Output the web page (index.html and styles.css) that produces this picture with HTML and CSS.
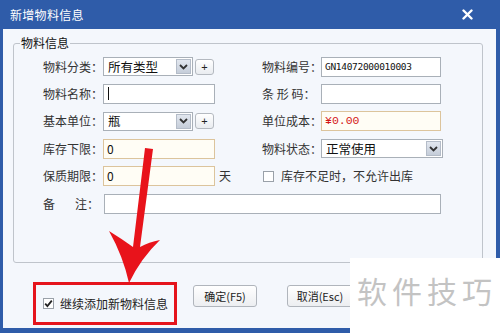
FILE: index.html
```html
<!DOCTYPE html>
<html lang="zh-CN">
<head>
    <meta charset="utf-8">
    <title>新增物料信息</title>
    <link rel="stylesheet" href="styles.css">
</head>
<body>
<div class="window">
    <div class="titlebar">
        <span class="title">新增物料信息</span>
        <svg class="close" width="11" height="11" viewBox="0 0 11 11">
            <path d="M1.5 1.5 L9.5 9.5 M9.5 1.5 L1.5 9.5" stroke="#fff" stroke-width="2.4" stroke-linecap="round"/>
        </svg>
    </div>

    <div class="client">
        <fieldset class="group">
            <legend>物料信息</legend>
            <div class="form">
                <span class="lbl">物料分类：</span>
                <div class="ctl">
                    <div class="select w90"><span class="val">所有类型</span><i class="drop"><svg width="9" height="6" viewBox="0 0 9 6"><path d="M1 1 L4.5 4.5 L8 1" fill="none" stroke="#333" stroke-width="1.8"/></svg></i></div>
                    <button class="plus">+</button>
                </div>
                <span class="lbl">物料编号：</span>
                <div class="ctl"><div class="input w120 code">GN14072000010003</div></div>

                <span class="lbl">物料名称：</span>
                <div class="ctl"><div class="input w112"><span class="caret"></span></div></div>
                <span class="lbl">条 形 码：</span>
                <div class="ctl"><div class="input w120"></div></div>

                <span class="lbl">基本单位：</span>
                <div class="ctl">
                    <div class="select w90"><span class="val">瓶</span><i class="drop"><svg width="9" height="6" viewBox="0 0 9 6"><path d="M1 1 L4.5 4.5 L8 1" fill="none" stroke="#333" stroke-width="1.8"/></svg></i></div>
                    <button class="plus">+</button>
                </div>
                <span class="lbl">单位成本：</span>
                <div class="ctl"><div class="input w120 warm money">¥0.00</div></div>

                <span class="lbl">库存下限：</span>
                <div class="ctl"><div class="input w112 warm">0</div></div>
                <span class="lbl">物料状态：</span>
                <div class="ctl">
                    <div class="select w122"><span class="val">正常使用</span><i class="drop"><svg width="9" height="6" viewBox="0 0 9 6"><path d="M1 1 L4.5 4.5 L8 1" fill="none" stroke="#333" stroke-width="1.8"/></svg></i></div>
                </div>

                <span class="lbl">保质期限：</span>
                <div class="ctl"><div class="input w112 warm">0</div><span class="unit">天</span></div>
                <label class="opt"><span class="check"></span>库存不足时，不允许出库</label>

                <span class="lbl">备<span class="gap"></span>注：</span>
                <div class="ctl memo"><div class="input wide"></div></div>
            </div>
        </fieldset>

        <div class="actions">
            <label class="keep">
                <span class="check on"><svg width="9" height="9" viewBox="0 0 9 9"><path d="M1.2 4.6 L3.4 7 L7.8 1.6" fill="none" stroke="#222" stroke-width="1.8"/></svg></span>
                继续添加新物料信息
            </label>
            <button class="btn ok">确定(F5)</button>
            <button class="btn cancel">取消(Esc)</button>
        </div>
    </div>

    <svg class="arrow" width="500" height="333" viewBox="0 0 500 333">
        <path d="M145 148 L153 149 L140 247 Q149 242 160 240 Q141 258 129 283 Q123 256 109 231 Q122 239 133 247 Z" fill="#e8131b"/>
    </svg>

    <div class="watermark">软件技巧</div>
</div>
</body>
</html>
```

FILE: styles.css
```css
body{
    margin:0;
    font-family:"Noto Sans CJK SC", "Liberation Sans", sans-serif;
}

.window{
    position:relative;
    width:500px;
    height:333px;
    background-color:#2f5ca9;
    overflow:hidden;
}

.titlebar{
    height:29px;
    display:flex;
    align-items:center;
    padding-left:10px;
    padding-right:27px;
    justify-content:space-between;
}
.title{
    color:white;
    font-size:12px;
    line-height:16px;
    letter-spacing:0.3px;
}

.client{
    margin:0 4px 0 3px;
    height:299px;
    background-color:#f4f7fc;
    overflow:hidden;
}

.group{
    margin:6px 13px 0 10px;
    padding:0 6px;
    height:228px;
    box-sizing:border-box;
    border:1px solid #bfc4cb;
    border-radius:3px;
}
.group legend{
    padding:0 1px;
    font-size:12px;
    line-height:16px;
    color:#111;
}

.form{
    padding-left:23px;
    padding-top:2px;
    display:grid;
    grid-template-columns:60px 159px 59px 122px;
    grid-auto-rows:27.4px;
    align-items:center;
    font-size:12px;
    color:#333;
}

.lbl{
    line-height:16px;
    white-space:pre;
}
.lbl .gap{
    display:inline-block;
    width:20px;
}

.ctl{
    display:flex;
    align-items:center;
}
.memo{
    grid-column:2 / 5;
}

.input{
    box-sizing:border-box;
    height:20px;
    border:1px solid #a9b0b8;
    background-color:white;
    font-size:12px;
    line-height:18px;
    padding-left:3px;
    color:#111;
}
.w112{ width:112px; }
.w120{ width:120px; }
.wide{ width:337px; margin-left:1px; }

.warm{
    border-color:#dcc49c;
    background-color:#fffdf5;
}
.code{
    font-family:"DejaVu Sans Mono", monospace;
    font-size:9.5px;
    letter-spacing:-0.3px;
}
.money{
    font-family:"Liberation Mono", monospace;
    font-size:11.5px;
    color:#d41616;
}
.caret{
    display:inline-block;
    width:1px;
    height:13px;
    margin-top:2px;
    margin-left:1px;
    background-color:#111;
    vertical-align:top;
}

.select{
    box-sizing:border-box;
    height:19px;
    display:flex;
    align-items:center;
    justify-content:space-between;
    border:1px solid #a9b0b8;
    background-color:white;
    padding:0 1px 0 4px;
}
.w90{ width:90px; }
.w122{ width:122px; }
.select .val{
    font-size:12.5px;
    line-height:16px;
    color:#111;
}
.drop{
    width:15px;
    height:15px;
    display:flex;
    align-items:center;
    justify-content:center;
    background:linear-gradient(#e2e7ef, #c5cdd9);
    border:1px solid #b4bcc8;
    box-sizing:border-box;
}

.plus{
    margin-left:2px;
    width:19px;
    height:16px;
    padding:0;
    font-size:11px;
    line-height:12px;
    border:1px solid #b4b9c0;
    border-radius:3px;
    background:linear-gradient(#ffffff, #e9ecf0);
    color:#222;
    font-family:"Liberation Sans", sans-serif;
}

.unit{
    margin-left:4px;
    line-height:16px;
}

.opt{
    grid-column:3 / 5;
    display:flex;
    align-items:center;
    line-height:16px;
}
.check{
    box-sizing:border-box;
    width:11px;
    height:11px;
    border:1px solid #9aa1a9;
    background-color:white;
    margin-right:7px;
    margin-left:1px;
    display:flex;
    align-items:center;
    justify-content:center;
}

.actions{
    display:flex;
    align-items:flex-start;
    padding-left:30px;
    margin-top:19px;
}
.keep{
    box-sizing:border-box;
    width:144px;
    height:43px;
    border:3px solid #e5141c;
    display:flex;
    align-items:center;
    padding-left:6px;
    font-size:12px;
    line-height:16px;
    color:#222;
}
.keep .check{
    margin-right:6px;
}

.btn{
    margin-top:3px;
    height:22px;
    padding:0;
    border:1px solid #b0b5bc;
    border-radius:3px;
    background:linear-gradient(#ffffff, #eceef1);
    font-family:"Noto Sans CJK SC", sans-serif;
    font-size:11px;
    color:#222;
}
.ok{
    margin-left:16px;
    width:64px;
}
.cancel{
    margin-left:30px;
    width:66px;
}

.arrow{
    position:absolute;
    left:0;
    top:0;
    pointer-events:none;
}

.watermark{
    position:absolute;
    left:350px;
    top:258px;
    right:0;
    bottom:0;
    background-color:white;
    color:#c3c3c3;
    font-size:30px;
    line-height:30px;
    padding:17px 0 0 7px;
    letter-spacing:5px;
}
```
